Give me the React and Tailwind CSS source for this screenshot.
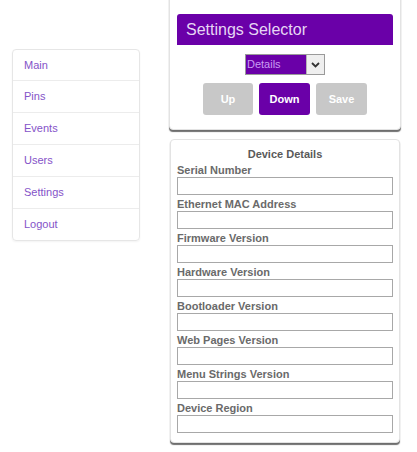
import React from "react";

const font = { fontFamily: '"Liberation Sans", Arial, sans-serif' };

const navItems = ["Main", "Pins", "Events", "Users", "Settings", "Logout"];
const fields = [
  "Serial Number",
  "Ethernet MAC Address",
  "Firmware Version",
  "Hardware Version",
  "Bootloader Version",
  "Web Pages Version",
  "Menu Strings Version",
  "Device Region",
];

export default function App() {
  return (
    <div
      className="w-[417px] h-[452px] overflow-hidden bg-white flex items-start font-['Liberation_Sans',Arial,sans-serif]"
      style={font}
    >
      <nav className="ml-[12px] mt-[49px] w-[128px] border border-[#e6e6e6] rounded-[4px] flex flex-col shadow-[0_1px_2px_rgba(0,0,0,0.05)]">
        {navItems.map((item, i) => (
          <a
            key={item}
            className={`flex items-center pl-[11px] text-[11px] text-[#8453c8] ${
              i > 0 ? "h-[32px] border-t border-[#ececec]" : "h-[30px]"
            }`}
          >
            {item}
          </a>
        ))}
      </nav>

      <div className="ml-[29px] w-[232px] flex flex-col">
        <div className="-mt-[6px] border border-[#e3e3e3] rounded-[4px] bg-white px-[7px] pt-[19px] pb-[14px] shadow-[0_2px_1px_#6e6e6e]">
          <div className="h-[31px] bg-[#6a00a8] rounded-t-[3px] flex items-center pl-[9px] text-[16px] text-[#e6d6f4]">
            Settings Selector
          </div>
          <div className="mt-[9px] flex justify-center">
            <div className="h-[21px] w-[80px] flex border border-[#9a9a9a]">
              <div className="flex-1 bg-[#6a00a8] text-[#c99cf2] text-[11px] leading-[19px] pl-[1px]">
                Details
              </div>
              <div className="w-[18px] bg-[#efefef] border-l border-[#b5b5b5] flex items-center justify-center">
                <svg width="9" height="6" viewBox="0 0 9 6">
                  <path d="M1 1 L4.5 4.5 L8 1" fill="none" stroke="#333" strokeWidth="1.8" />
                </svg>
              </div>
            </div>
          </div>
          <div className="mt-[8px] flex justify-center gap-[6px]">
            <button className="w-[50px] h-[32px] rounded-[3px] bg-[#c8c8c8] text-white text-[11px] font-bold">
              Up
            </button>
            <button className="w-[51px] h-[32px] rounded-[3px] bg-[#6a00a8] text-white text-[11px] font-bold">
              Down
            </button>
            <button className="w-[51px] h-[32px] rounded-[3px] bg-[#c8c8c8] text-white text-[11px] font-bold">
              Save
            </button>
          </div>
        </div>

        <div className="mt-[9px] ml-[1px] w-[230px] border border-[#e3e3e3] rounded-[4px] bg-white px-[6px] pt-[7px] pb-[7px] shadow-[0_2px_1px_#6e6e6e]">
          <div className="text-center text-[11px] font-bold leading-[14px] text-[#5a5a5a] mb-[2px]">
            Device Details
          </div>
          {fields.map((f) => (
            <div key={f} className="flex flex-col mb-[2px]">
              <div className="text-[11px] font-bold leading-[14px] text-[#6a6a6a]">{f}</div>
              <div className="h-[18px] w-[216px] border border-[#a8a8a8] bg-white"></div>
            </div>
          ))}
        </div>
      </div>
    </div>
  );
}
